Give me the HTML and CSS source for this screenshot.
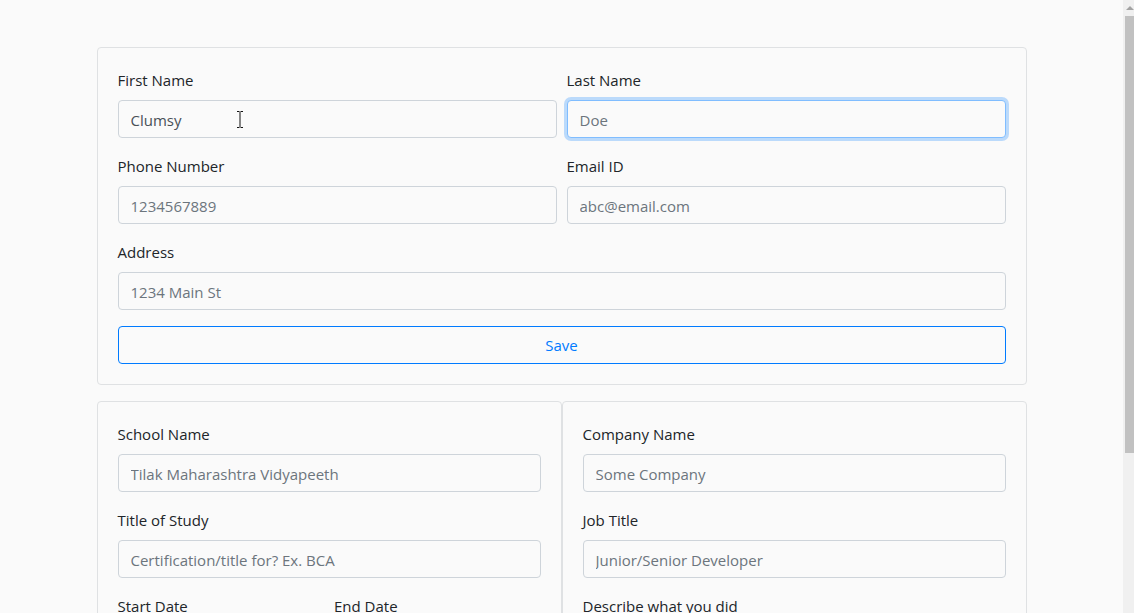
FILE: index.html
```html
<!DOCTYPE html>
<html lang="en">
<head>
<meta charset="utf-8">
<title>Resume Form</title>
<link rel="stylesheet" href="styles.css">
</head>
<body>
<div class="page">
  <div class="container">
    <form class="card card-personal">
      <div class="row">
        <div class="group">
          <label class="label">First Name</label>
          <div class="field-wrap">
            <input class="input" type="text" value="Clumsy">
            <svg class="ibeam" width="8" height="17" viewBox="0 0 8 17"><path d="M1 0.5h2.5M4.5 0.5h2.5M4 1v15M1 16.5h2.5M4.5 16.5h2.5" stroke="#111" stroke-width="1" fill="none"/></svg>
          </div>
        </div>
        <div class="group">
          <label class="label">Last Name</label>
          <input class="input input-focus" type="text" placeholder="Doe">
        </div>
      </div>
      <div class="row">
        <div class="group">
          <label class="label">Phone Number</label>
          <input class="input" type="text" placeholder="1234567889">
        </div>
        <div class="group">
          <label class="label">Email ID</label>
          <input class="input" type="text" placeholder="abc@email.com">
        </div>
      </div>
      <div class="group">
        <label class="label">Address</label>
        <input class="input" type="text" placeholder="1234 Main St">
      </div>
      <button class="btn-outline" type="button">Save</button>
    </form>

    <div class="pair">
      <form class="card card-half">
        <div class="group">
          <label class="label">School Name</label>
          <input class="input" type="text" placeholder="Tilak Maharashtra Vidyapeeth">
        </div>
        <div class="group">
          <label class="label">Title of Study</label>
          <input class="input" type="text" placeholder="Certification/title for? Ex. BCA">
        </div>
        <div class="row">
          <div class="group">
            <label class="label">Start Date</label>
            <input class="input" type="text" placeholder="2016">
          </div>
          <div class="group">
            <label class="label">End Date</label>
            <input class="input" type="text" placeholder="2019">
          </div>
        </div>
      </form>
      <form class="card card-half">
        <div class="group">
          <label class="label">Company Name</label>
          <input class="input" type="text" placeholder="Some Company">
        </div>
        <div class="group">
          <label class="label">Job Title</label>
          <input class="input" type="text" placeholder="Junior/Senior Developer">
        </div>
        <div class="group">
          <label class="label">Describe what you did</label>
          <textarea class="input textarea" placeholder="Worked on..."></textarea>
        </div>
      </form>
    </div>
  </div>
</div>
<div class="scrollbar">
  <div class="scroll-arrow"><span class="tri"></span></div>
  <div class="scroll-thumb"></div>
  <div class="scroll-rest"></div>
</div>
</body>
</html>
```
FILE: styles.css
```css
html, body {
  margin: 0;
  padding: 0;
  height: 100%;
  overflow: hidden;
}
body {
  display: flex;
  background: #fafafa;
  font-family: "Open Sans", "Liberation Sans", sans-serif;
  font-size: 15px;
  line-height: 24px;
  color: #212529;
}
.page {
  flex: 1;
  min-width: 0;
}
.container {
  width: 930px;
  margin: 47px auto 0;
}
.card {
  border: 1px solid #dfe1e3;
  border-radius: 4px;
  padding: 20px;
  margin: 0;
  background: #fafafa;
}
.card-personal {
  display: flex;
  flex-direction: column;
}
.row {
  display: flex;
  gap: 10px;
}
.row > .group {
  flex: 1;
  min-width: 0;
}
.group {
  display: flex;
  flex-direction: column;
  margin-bottom: 16px;
}
.label {
  display: block;
  margin-bottom: 8px;
  height: 24px;
}
.field-wrap {
  position: relative;
  display: flex;
}
.field-wrap .input {
  flex: 1;
}
.ibeam {
  position: absolute;
  left: 118px;
  top: 11px;
}
.input {
  box-sizing: border-box;
  height: 38px;
  width: 100%;
  padding: 7px 12px 5px;
  border: 1px solid #ced4da;
  border-radius: 4px;
  background: #fafafa;
  font: inherit;
  color: #495057;
  outline: none;
}
.input::placeholder {
  color: #6c757d;
  opacity: 1;
}
.input-focus {
  border-color: #80bdff;
  box-shadow: 0 0 0 3px rgba(0, 123, 255, 0.25);
}
.textarea {
  height: 86px;
  resize: none;
}
.btn-outline {
  box-sizing: border-box;
  height: 38px;
  width: 100%;
  border: 1px solid #007bff;
  border-radius: 4px;
  background: transparent;
  color: #007bff;
  font: inherit;
  padding: 6px 12px;
}
.pair {
  display: flex;
  margin-top: 16px;
}
.card-half {
  flex: 1;
  min-width: 0;
}
.scrollbar {
  width: 11px;
  height: 100%;
  background: #f0f0f0;
  display: flex;
  flex-direction: column;
  flex-shrink: 0;
}
.scroll-arrow {
  height: 16px;
  display: flex;
  justify-content: center;
  align-items: center;
  padding-left: 2px;
}
.tri {
  width: 0;
  height: 0;
  border-left: 4px solid transparent;
  border-right: 4px solid transparent;
  border-bottom: 4px solid #a3a3a3;
}
.scroll-thumb {
  height: 437px;
  margin-left: 2px;
  background: #c1c1c1;
}
.scroll-rest {
  flex: 1;
}
```
